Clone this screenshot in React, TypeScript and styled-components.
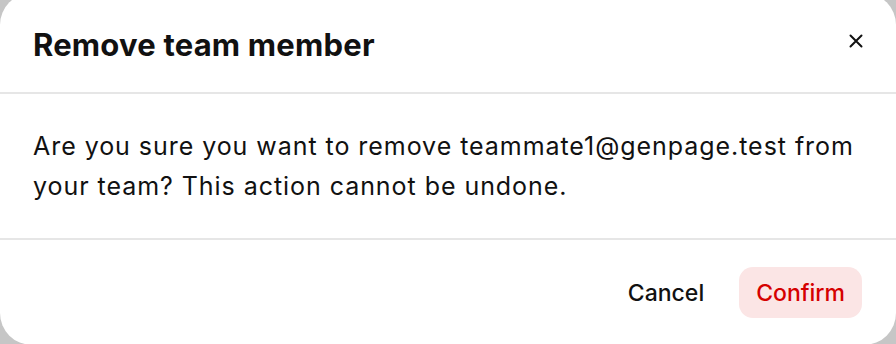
import React from "react";
import styled, { createGlobalStyle } from "styled-components";

const GlobalStyle = createGlobalStyle`
  html, body {
    margin: 0;
    padding: 0;
    background: #c6c6c6;
    overflow: hidden;
  }
  body {
    font-family: Inter, "Noto Sans", "Liberation Sans", sans-serif;
    color: #111111;
  }
`;

const Dialog = styled.div`
  width: 896px;
  height: 352px;
  margin-top: -7px;
  background: #ffffff;
  border-radius: 32px;
  display: flex;
  flex-direction: column;
  overflow: hidden;
`;

const Header = styled.div`
  height: 101px;
  flex: none;
  box-sizing: border-box;
  padding: 4px 28px 0 33px;
  display: flex;
  align-items: center;
  justify-content: space-between;
  border-bottom: 2px solid #e6e6e6;
`;

const Title = styled.h2`
  margin: 0;
  font-size: 31px;
  font-weight: 700;
  letter-spacing: 0.2px;
  color: #111111;
`;

const CloseButton = styled.button`
  width: 24px;
  height: 24px;
  margin-bottom: 8px;
  padding: 0;
  border: none;
  background: transparent;
  display: flex;
  align-items: center;
  justify-content: center;
  cursor: pointer;
  color: #111111;
`;

const Body = styled.div`
  height: 146px;
  flex: none;
  box-sizing: border-box;
  padding: 0 33px;
  display: flex;
  align-items: center;
  border-bottom: 2px solid #e6e6e6;
`;

const Message = styled.p`
  margin: 0;
  font-size: 25px;
  line-height: 40px;
  letter-spacing: 0.95px;
  color: #111111;
`;

const Footer = styled.div`
  flex: 1;
  display: flex;
  align-items: center;
  justify-content: flex-end;
  gap: 18px;
  padding: 0 34px 0 0;
`;

const ActionButton = styled.button<{ $danger?: boolean }>`
  height: 51px;
  padding: 0 17px;
  border: none;
  border-radius: 14px;
  font-family: inherit;
  font-size: 23px;
  font-weight: 500;
  cursor: pointer;
  background: ${(p) => (p.$danger ? "#fbe5e5" : "transparent")};
  color: ${(p) => (p.$danger ? "#d50000" : "#111111")};
`;

export default function App() {
  return (
    <>
      <GlobalStyle />
      <Dialog role="dialog" aria-labelledby="dlg-title">
        <Header>
          <Title id="dlg-title">Remove team member</Title>
          <CloseButton aria-label="Close">
            <svg width="14" height="14" viewBox="0 0 14 14" fill="none">
              <path d="M1.5 1.5L12.5 12.5M12.5 1.5L1.5 12.5" stroke="currentColor" strokeWidth="2" strokeLinecap="round" />
            </svg>
          </CloseButton>
        </Header>
        <Body>
          <Message>
            Are you sure you want to remove teammate1@genpage.test from your team? This action cannot be undone.
          </Message>
        </Body>
        <Footer>
          <ActionButton>Cancel</ActionButton>
          <ActionButton $danger>Confirm</ActionButton>
        </Footer>
      </Dialog>
    </>
  );
}
